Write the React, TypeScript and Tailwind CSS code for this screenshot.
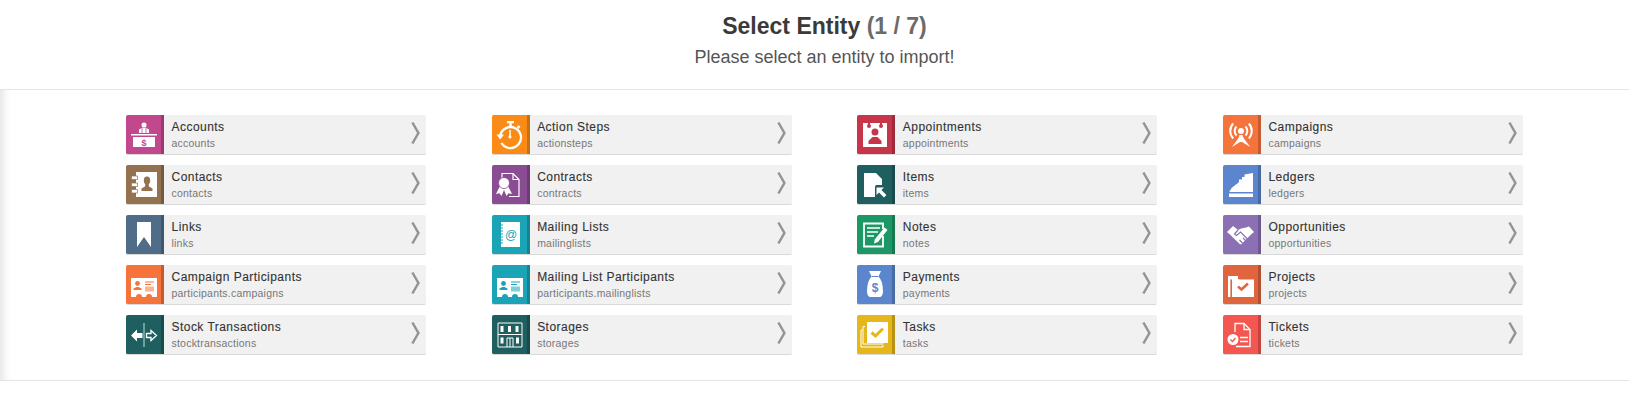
import React from "react";

const W = "#fff";

function Card({ c }: { c: string }) {
  return (
    <>
      <path fill={W} d="M5 13h26v19h-5a3 3 0 0 0-6 0h-4a3 3 0 0 0-6 0H5z" />
      <circle cx="11.5" cy="18.5" r="2.4" fill={c} />
      <path fill={c} d="M7.5 25v-1.5l3-1.5h2l3 1.5V25z" />
      <path stroke={c} strokeWidth="1" d="M19 17h9M19 19.5h6" />
      <path fill={c} opacity=".55" d="M19 21.5h9v5h-9z" />
    </>
  );
}

const icons: Record<string, (c: string) => React.ReactNode> = {
  accounts: (c) => (
    <>
      <circle cx="18" cy="10" r="2.5" fill={W} />
      <path fill={W} d="M13 18v-3.5l3-1.7h4l3 1.7V18z" />
      <path stroke={c} strokeWidth=".8" d="M16 13v5M20 13v5" />
      <path fill={W} d="M5 19h26v1.6H5zM7 22h22v10H7z" />
      <text x="18" y="30.5" textAnchor="middle" fontSize="9" fontWeight="700" fontFamily="Liberation Sans" fill={c}>$</text>
    </>
  ),
  contacts: (c) => (
    <>
      <path fill={W} d="M10 7h21v25H10z" />
      <path fill={W} stroke={c} strokeWidth=".7" d="M5.500 11h6v3.500h-6zM5.500 18h6v3.500h-6zM5.500 24.500h6V28h-6z" />
      <ellipse cx="21" cy="15.500" rx="3.200" ry="4" fill={c} />
      <path fill={c} d="M19.500 18h3l.5 3.500 3.500 2V26h-11v-2.500l3.500-2z" />
    </>
  ),
  links: () => <path fill={W} d="M11 7h14v25l-7-10-7 10z" />,
  cparts: (c) => <Card c={c} />,
  stock: () => (
    <>
      <path stroke="#8fbdb8" strokeWidth="1.400" d="M18 8v24" />
      <path fill={W} d="M5 20.500l6-6v3.500h5.500v5H11v3.500z" />
      <path fill="none" stroke={W} strokeWidth="1.300" d="M30.500 20.500l-5.500-5v3h-4.500v4H25v3z" />
    </>
  ),
  action: () => (
    <>
      <path fill={W} d="M15 6h7v2.200h-2.300V11h-2.400V8.200H15zM26.600 10l1.900 1.900-2 2-1.900-1.900z" />
      <path fill="none" stroke={W} strokeWidth="2.300" d="M8.200 20.500A10.500 10.500 0 1 1 9.500 28" />
      <path fill={W} d="M4.500 19.500h7.500L8.200 24.500z" />
      <path stroke={W} strokeWidth="1.500" d="M18 15v7" />
      <circle cx="18" cy="22" r="1.500" fill={W} />
    </>
  ),
  contracts: (c) => (
    <>
      <path fill="none" stroke={W} strokeWidth="1.200" d="M10 14V8.500h11l6 6V31.500H17" />
      <path fill="none" stroke={W} strokeWidth="1.200" d="M21 8.500v6h6" />
      <path fill={W} d="M8 21l-4 8 3.500-.8L9.500 31l2.500-6 2.500 6 2-2.800 3.500.8-4-8z" />
      <circle cx="12" cy="18" r="5.500" fill={W} stroke={c} strokeWidth=".8" />
    </>
  ),
  mailing: (c) => (
    <>
      <path fill={W} d="M9 7h19v25H9z" />
      <path stroke={c} strokeWidth="1" d="M8 10h3M8 13h3M8 16h3M8 19h3M8 22h3M8 25h3M8 28h3" />
      <text x="19" y="24" textAnchor="middle" fontSize="12" fontFamily="Liberation Sans" fill={c}>@</text>
    </>
  ),
  mparts: (c) => <Card c={c} />,
  storages: () => (
    <>
      <path fill="none" stroke={W} strokeWidth="1" d="M6 8h24v24H6zM6 19.500h24" />
      <path fill={W} d="M8.500 11h3v6h-3zM16 11h3v6h-3zM23.500 11h3v6h-3zM8.500 22.500h3v6h-3zM24 22.500h3v6h-3z" />
      <path fill="none" stroke={W} strokeWidth="1" d="M15 32V23h6v9M18 23v9" />
    </>
  ),
  appointments: (c) => (
    <>
      <path fill={W} d="M6 8h24v24H6z" />
      <path fill={c} d="M11 8h2v2.500h-2zM23 8h2v2.500h-2z" />
      <circle cx="12" cy="11" r="2" fill={c} />
      <circle cx="24" cy="11" r="2" fill={c} />
      <circle cx="18" cy="17" r="3.500" fill={c} />
      <path fill={c} d="M11.500 29v-3l4-4h5l4 4v3z" />
    </>
  ),
  items: () => (
    <>
      <path fill={W} d="M7 8h12l6 6v6h-6l-1 1.500V32H7z" />
      <path fill={W} d="M19.500 22.500h7.500l-2.600 2.600 5 5-2.400 2.400-5-5-2.500 2.500z" />
    </>
  ),
  notes: () => (
    <>
      <path fill="none" stroke={W} strokeWidth="1.800" d="M26 21v10.500H7V8.500h19V14" />
      <path stroke={W} strokeWidth="1.500" d="M10 13h13M10 17h11M10 21h7" />
      <path fill={W} d="M27.500 12.500l3 2.500L21 27l-4 1.500.7-4z" />
    </>
  ),
  payments: (c) => (
    <>
      <path fill={W} d="M12 6h12l-2.500 5.500c3 3 4.500 8 4.500 15 0 3.500-1.500 5.500-3.500 5.500h-9C11.500 32 10 30 10 26.500c0-7 1.500-12 4.500-15z" />
      <path stroke={c} strokeWidth="1" d="M14.500 11.500h7" />
      <text x="18" y="27" textAnchor="middle" fontSize="12" fontWeight="700" fontFamily="Liberation Sans" fill={c}>$</text>
    </>
  ),
  tasks: (c) => (
    <>
      <path fill="none" stroke={W} strokeWidth="1" d="M8 11.500h-2V29h20v-.5M5 15H4v17h22v-2" />
      <path fill={W} d="M10 7h21v21H10z" />
      <path fill="none" stroke={c} strokeWidth="3" d="M14.500 17.500l4 3.500 7.500-7.500" />
    </>
  ),
  campaigns: () => (
    <>
      <circle cx="18" cy="16" r="3" fill={W} />
      <path fill="none" stroke={W} strokeWidth="2" d="M13.500 11.500a6.500 6.500 0 0 0 0 9M22.500 11.500a6.500 6.500 0 0 1 0 9M10.200 8.500a11 11 0 0 0 0 15M25.800 8.500a11 11 0 0 1 0 15" />
      <path fill={W} d="M16.500 20h3l1 3 6.800 9-8.300-5h-2L9 32l6.500-9z" />
    </>
  ),
  ledgers: () => (
    <path fill={W} d="M6 28.500h24V32H6zM6.500 27c0-1.500.5-2 1.500-2.500 0-1 .5-2 1.500-2 .5-1 1-1.500 2.200-1.500.3-1.200 1-1.800 2.300-1.800.3-1.200 1-1.700 2-1.700v-3h3v-2.500h2.500V9.500L30 8v19z" />
  ),
  opportunities: (c) => (
    <>
      <path fill={W} d="M4 17l6-6 5 4 3-1.500 5-1 3-1 5 5.500-3.500 3-8.500 8.500a2 2 0 0 1-3 0l-8-8z" />
      <path fill="none" stroke={c} strokeWidth="1.200" d="M15 15l-3.500 4 2 1.500 4-3.500 8 8M16 29.500l-3-3M19.500 28l-3-3M23 26l-3-3" />
    </>
  ),
  projects: (c) => (
    <>
      <path fill={W} d="M5 11h10v3l2 .5h14V32H9V14.500H5z" />
      <path fill={W} d="M5 14h2.500v18H5z" />
      <path stroke={c} strokeWidth=".6" d="M8.200 14.500V32" />
      <path fill="none" stroke={c} strokeWidth="2.600" d="M15 21.500l3.500 3 6.500-6" />
    </>
  ),
  tickets: (c) => (
    <>
      <path fill="none" stroke={W} strokeWidth="1.300" d="M12 17V8.500h9l6 6v17H13" />
      <path fill="none" stroke={W} strokeWidth="1.300" d="M21 8.500v6h6" />
      <path stroke={W} strokeWidth="1.300" d="M17 22.500h8M17 26.500h8" />
      <circle cx="10" cy="24.500" r="5.500" fill={W} />
      <path fill="none" stroke={c} strokeWidth="1.400" d="M7.500 24.500l2 2 3-3.500" />
    </>
  ),
};

type E = { name: string; sub: string; icon: string; color: string; cls: string };

const entities: E[] = [
  { name: "Accounts", sub: "accounts", icon: "accounts", color: "#c2488e", cls: "bg-[#c2488e]" },
  { name: "Action Steps", sub: "actionsteps", icon: "action", color: "#f98b16", cls: "bg-[#f98b16]" },
  { name: "Appointments", sub: "appointments", icon: "appointments", color: "#c7354b", cls: "bg-[#c7354b]" },
  { name: "Campaigns", sub: "campaigns", icon: "campaigns", color: "#f5743b", cls: "bg-[#f5743b]" },
  { name: "Contacts", sub: "contacts", icon: "contacts", color: "#94714f", cls: "bg-[#94714f]" },
  { name: "Contracts", sub: "contracts", icon: "contracts", color: "#8a4d94", cls: "bg-[#8a4d94]" },
  { name: "Items", sub: "items", icon: "items", color: "#1f5f5f", cls: "bg-[#1f5f5f]" },
  { name: "Ledgers", sub: "ledgers", icon: "ledgers", color: "#5b86ce", cls: "bg-[#5b86ce]" },
  { name: "Links", sub: "links", icon: "links", color: "#4f6d88", cls: "bg-[#4f6d88]" },
  { name: "Mailing Lists", sub: "mailinglists", icon: "mailing", color: "#1ba4b6", cls: "bg-[#1ba4b6]" },
  { name: "Notes", sub: "notes", icon: "notes", color: "#1b9866", cls: "bg-[#1b9866]" },
  { name: "Opportunities", sub: "opportunities", icon: "opportunities", color: "#8b70b4", cls: "bg-[#8b70b4]" },
  { name: "Campaign Participants", sub: "participants.campaigns", icon: "cparts", color: "#f5743b", cls: "bg-[#f5743b]" },
  { name: "Mailing List Participants", sub: "participants.mailinglists", icon: "mparts", color: "#1ba4b6", cls: "bg-[#1ba4b6]" },
  { name: "Payments", sub: "payments", icon: "payments", color: "#5b86ce", cls: "bg-[#5b86ce]" },
  { name: "Projects", sub: "projects", icon: "projects", color: "#e0653f", cls: "bg-[#e0653f]" },
  { name: "Stock Transactions", sub: "stocktransactions", icon: "stock", color: "#1f5f5f", cls: "bg-[#1f5f5f]" },
  { name: "Storages", sub: "storages", icon: "storages", color: "#1f5f5f", cls: "bg-[#1f5f5f]" },
  { name: "Tasks", sub: "tasks", icon: "tasks", color: "#e6b71b", cls: "bg-[#e6b71b]" },
  { name: "Tickets", sub: "tickets", icon: "tickets", color: "#f4574f", cls: "bg-[#f4574f]" },
];

function Tile({ e }: { e: E }) {
  return (
    <div className="flex h-10 w-[300px] items-stretch overflow-hidden rounded-[2px] border-b border-b-[#d9d9d9] bg-[#f1f1f1]">
      <div className={`h-10 w-[38px] shrink-0 border-r-[3px] border-r-black/20 ${e.cls}`}>
        <svg width="35" height="40" viewBox="0 0 35 40">
          {icons[e.icon](e.color)}
        </svg>
      </div>
      <div className="flex min-w-0 flex-1 flex-col pl-[7.500px]">
        <div className="mt-[4px] h-[17px] text-[12px] leading-[17px] tracking-[0.460px] text-[#333] [-webkit-text-stroke:0.12px_#333]">{e.name}</div>
        <div className="text-[10.500px] leading-[14px] tracking-[0.220px] text-[#777]">{e.sub}</div>
      </div>
      <div className="flex w-[15px] shrink-0 items-start pt-[6px]">
        <svg width="9" height="24" viewBox="0 0 9 24">
          <path d="M1.400 1.500L7.400 12 1.400 22.500" fill="none" stroke="#949494" strokeWidth="2.500" />
        </svg>
      </div>
    </div>
  );
}

export default function App() {
  return (
    <div className="min-h-[405px] bg-white font-['Liberation_Sans',Arial,sans-serif]">
      <header className="h-[90px] border-b border-b-[#e5e5e5] pl-5 pt-[12px] text-center">
        <h1 className="text-[23px] leading-[28px] font-bold text-[#3a3a3a]">
          Select Entity <span className="text-[#6b6b6b]">(1 / 7)</span>
        </h1>
        <p className="mt-[5px] text-[18px] leading-[24px] text-[#555]">Please select an entity to import!</p>
      </header>
      <main className="h-[291px] border-b border-b-[#e5e5e5] pt-[25px] pl-[126px] shadow-[inset_9px_0_8px_-6px_#e2e2e2]">
        <div className="grid grid-cols-[repeat(4,300px)] gap-x-[65.670px] gap-y-[10px]">
          {entities.map((e) => (
            <Tile key={e.name} e={e} />
          ))}
        </div>
      </main>
    </div>
  );
}
